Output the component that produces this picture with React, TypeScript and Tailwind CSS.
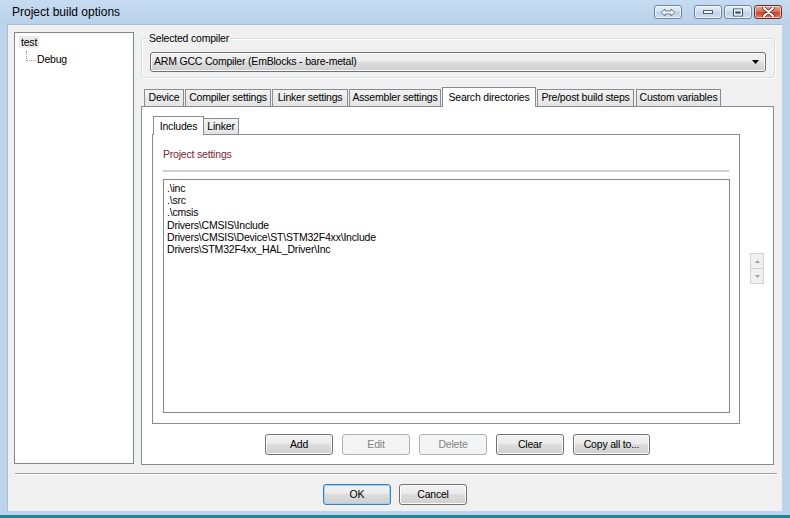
import React from "react";

const font = { fontFamily: '"Liberation Sans", Arial, sans-serif' };
const ui = "text-[10.5px] tracking-[-0.2px]";

function Btn({ label, disabled, focused, w = "w-[68px]" }: { label: string; disabled?: boolean; focused?: boolean; w?: string }) {
  if (disabled) {
    return (
      <div className={`${w} ${ui} h-[21px] rounded-[3px] border border-[#adb2b5] bg-[#f4f4f4] flex items-center justify-center text-[#838383]`}>
        {label}
      </div>
    );
  }
  return (
    <div
      className={`${w} ${ui} h-[21px] rounded-[3px] border ${
        focused ? "border-[#3c7fb1] shadow-[inset_0_0_0_1px_#9ed3f5]" : "border-[#707070] shadow-[inset_0_0_0_1px_#fcfcfc]"
      } bg-[linear-gradient(#f2f2f2_0%,#ebebeb_45%,#dddddd_50%,#cfcfcf_100%)] flex items-center justify-center text-black`}
    >
      {label}
    </div>
  );
}

function Tab({ label, w, selected, className = "" }: { label: string; w: string; selected?: boolean; className?: string }) {
  if (selected) {
    return (
      <div className={`${w} ${ui} ${className} shrink-0 whitespace-nowrap h-[20px] relative z-10 -mb-[1px] bg-white border border-b-0 border-[#898c95] flex justify-center items-start pt-[2px] text-black`}>
        {label}
      </div>
    );
  }
  return (
    <div className={`${w} ${ui} ${className} shrink-0 whitespace-nowrap h-[17px] bg-[linear-gradient(#f2f2f2,#e4e4e4)] border border-b-0 border-[#898c95] flex justify-center items-center text-black`}>
      {label}
    </div>
  );
}

function TitleButton({ kind }: { kind: "swap" | "min" | "max" | "close" }) {
  const base =
    kind === "close"
      ? "bg-[linear-gradient(#e8a597,#d7735f_45%,#c7452a_50%,#d57a5e)] border-[#6b2a1e]"
      : "bg-[linear-gradient(#e6eff8,#d3e1f0_45%,#bfd2e8_50%,#cfdff0)] border-[#6d86a5]";
  return (
    <div className={`w-[28px] h-[14px] rounded-[3px] border ${base} flex items-center justify-center shadow-[inset_0_0_0_1px_rgba(255,255,255,0.6)]`}>
      {kind === "swap" && (
        <svg width="16" height="9" viewBox="0 0 16 9">
          <path d="M1 4.5 L5 1 V3 H11 V1 L15 4.5 L11 8 V6 H5 V8 Z" fill="#f4f7fb" stroke="#5d6f86" strokeWidth="0.9" strokeLinejoin="round" />
        </svg>
      )}
      {kind === "min" && (
        <svg width="12" height="6" viewBox="0 0 12 6">
          <rect x="1.5" y="1.5" width="9" height="3" fill="#f4f7fb" stroke="#4d5f76" strokeWidth="1" />
        </svg>
      )}
      {kind === "max" && (
        <svg width="12" height="9" viewBox="0 0 12 9">
          <rect x="1.5" y="1" width="9" height="7" fill="none" stroke="#3c4d63" strokeWidth="1" />
          <rect x="2.5" y="2" width="7" height="5" fill="none" stroke="#f4f7fb" strokeWidth="1" />
          <rect x="3.5" y="3.5" width="5" height="2" fill="#3c4d63" />
        </svg>
      )}
      {kind === "close" && (
        <svg width="13" height="10" viewBox="0 0 13 10">
          <path d="M2 1 L11 9 M11 1 L2 9" stroke="#5a2218" strokeWidth="3.4" strokeLinecap="round" />
          <path d="M2 1 L11 9 M11 1 L2 9" stroke="#ffffff" strokeWidth="2" strokeLinecap="round" />
        </svg>
      )}
    </div>
  );
}

const dirs = [
  ".\\inc",
  ".\\src",
  ".\\cmsis",
  "Drivers\\CMSIS\\Include",
  "Drivers\\CMSIS\\Device\\ST\\STM32F4xx\\Include",
  "Drivers\\STM32F4xx_HAL_Driver\\Inc",
];

export default function App() {
  return (
    <div className="w-[790px] h-[518px] flex flex-col bg-[#bcd3ec] overflow-hidden" style={font}>
      {/* title bar */}
      <div className="h-[24px] flex items-center pl-[12px] pr-[8px] bg-[linear-gradient(#c6dbf1,#b9d1ea)]">
        <span className="text-[12px] text-black">Project build options</span>
        <div className="ml-auto flex items-center">
          <TitleButton kind="swap" />
          <div className="w-[12px]" />
          <TitleButton kind="min" />
          <div className="w-[2px]" />
          <TitleButton kind="max" />
          <div className="w-[2px]" />
          <TitleButton kind="close" />
        </div>
      </div>

      {/* client area */}
      <div className="ml-[7px] w-[775px] h-[487px] bg-[#f0f0f0] border-t border-l border-[#a8bdd6] flex flex-col">
        <div className="flex gap-[7px] pl-[6px] pt-[7px]">
          {/* tree */}
          <div className={`w-[120px] h-[432px] bg-white border border-[#828790] pl-[4px] pt-[2px] ${ui} text-black`}>
            <div className="inline-block bg-[#ececec] px-[2px] leading-[12px]">test</div>
            <div className="flex items-start">
              <div className="ml-[7px] w-[10px] h-[10px] border-l border-b border-dotted border-[#a0a0a0]" />
              <span className="ml-[1px] mt-[2px] leading-[12px]">Debug</span>
            </div>
          </div>

          {/* right column */}
          <div className="w-[634px] flex flex-col">
            {/* selected compiler group */}
            <div className="relative mt-[6px] h-[40px] rounded-[3px] border border-[#d5dfe5] shadow-[inset_1px_1px_0_#ffffff,1px_1px_0_#ffffff] px-[8px] pt-[13px]">
              <span className={`absolute -top-[7px] left-[6px] bg-[#f0f0f0] px-[1px] ${ui} leading-[12px] text-black`}>
                Selected compiler
              </span>
              <div className={`h-[20px] rounded-[3px] border border-[#707070] bg-[linear-gradient(#f2f2f2_0%,#ebebeb_45%,#dddddd_50%,#cfcfcf_100%)] shadow-[inset_0_0_0_1px_#fafafa] flex items-center pl-[3px] pr-[6px] ${ui} text-black`}>
                <span>ARM GCC Compiler (EmBlocks - bare-metal)</span>
                <svg className="ml-auto" width="7" height="4" viewBox="0 0 7 4">
                  <path d="M0 0 H7 L3.5 4 Z" fill="#000" />
                </svg>
              </div>
            </div>

            {/* tabs */}
            <div className="mt-[9px] h-[19px] flex items-end pl-[3px] gap-[1px]">
              <Tab label="Device" w="w-[40px]" />
              <Tab label="Compiler settings" w="w-[86px]" />
              <Tab label="Linker settings" w="w-[76px]" />
              <Tab label="Assembler settings" w="w-[92px]" />
              <Tab label="Search directories" w="w-[94px]" selected />
              <Tab label="Pre/post build steps" w="w-[97px]" />
              <Tab label="Custom variables" w="w-[85px]" className="ml-[1px]" />
            </div>

            {/* tab page */}
            <div className="w-[633px] h-[359px] bg-white border border-[#898c95] flex flex-col pl-[10px] pt-[9px]">
              <div className="flex">
                <div className="w-[588px] flex flex-col">
                  {/* inner tabs */}
                  <div className="h-[18px] flex items-end pl-[1px]">
                    <div className={`h-[19px] w-[51px] relative z-10 -mb-[1px] bg-white border border-b-0 border-[#898c95] flex items-start justify-center pt-[2px] ${ui}`}>
                      Includes
                    </div>
                    <div className={`h-[16px] w-[35px] bg-[linear-gradient(#f2f2f2,#e4e4e4)] border border-b-0 border-l-0 border-[#898c95] flex items-center justify-center ${ui}`}>
                      Linker
                    </div>
                  </div>
                  <div className="h-[290px] border border-[#898c95] pl-[10px] pr-[8px] pt-[13px] flex flex-col">
                    <div className={`${ui} leading-[13px] text-[#7b2432]`}>Project settings</div>
                    <div className="mt-[9px] h-[2px] w-[566px] bg-[#d0d0d0]" />
                    <div className={`mt-[7px] w-[567px] h-[234px] border border-[#828790] pl-[3px] pt-[2px] ${ui} leading-[12.2px] text-black`}>
                      {dirs.map((d) => (
                        <div key={d}>{d}</div>
                      ))}
                    </div>
                  </div>
                </div>
                {/* spinner */}
                <div className="ml-[10px] mt-[137px] w-[14px] flex flex-col">
                  <div className="h-[16px] border border-[#d3d3d3] bg-[#f0f0f0] flex items-center justify-center">
                    <svg width="5" height="3" viewBox="0 0 5 3">
                      <path d="M0 3 L2.5 0 L5 3 Z" fill="#a0a0a0" />
                    </svg>
                  </div>
                  <div className="h-[15px] border border-t-0 border-[#d3d3d3] bg-[#f0f0f0] flex items-center justify-center">
                    <svg width="5" height="3" viewBox="0 0 5 3">
                      <path d="M0 0 L2.5 3 L5 0 Z" fill="#a0a0a0" />
                    </svg>
                  </div>
                </div>
              </div>

              {/* buttons */}
              <div className="mt-[10px] pr-[10px] flex justify-center gap-[9px]">
                <Btn label="Add" />
                <Btn label="Edit" disabled />
                <Btn label="Delete" disabled />
                <Btn label="Clear" />
                <Btn label="Copy all to..." w="w-[77px]" />
              </div>
            </div>
          </div>
        </div>

        {/* separator */}
        <div className="mt-[8px] ml-[7px] w-[762px] h-[2px] border-t border-[#a0a0a0] border-b border-b-white" />

        {/* bottom buttons */}
        <div className="mt-[9px] flex justify-center gap-[8px]">
          <Btn label="OK" focused />
          <Btn label="Cancel" />
        </div>
      </div>

      <div className="flex-1" />
      <div className="h-[3px] bg-[#17889a]" />
    </div>
  );
}
